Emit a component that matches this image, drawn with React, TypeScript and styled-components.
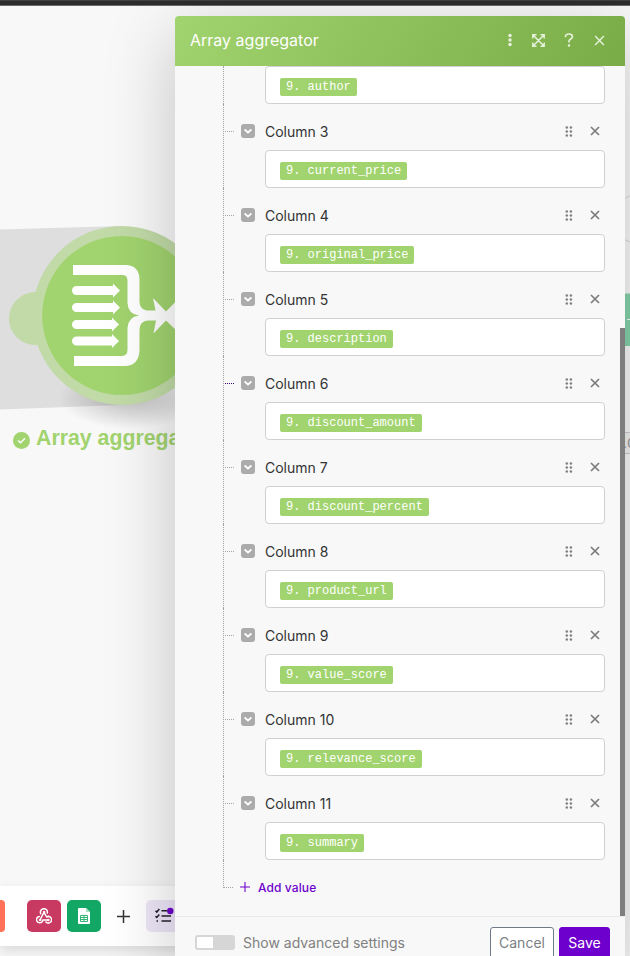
import React from "react";
import styled, { createGlobalStyle } from "styled-components";

const GlobalStyle = createGlobalStyle`
  *, *::before, *::after { box-sizing: border-box; }
  html, body { margin: 0; padding: 0; overflow: hidden; }
  body { font-family: Inter, "Liberation Sans", sans-serif; }
  button { font: inherit; padding: 0; border: 0; background: none; }
  svg { display: block; flex: none; }
`;

const Page = styled.div`
  position: relative;
  display: flex;
  flex-direction: column;
  width: 630px;
  height: 956px;
  overflow: hidden;
  background: #f8f8f8;
`;

const TopStrip = styled.div`
  flex: none;
  height: 6px;
  background: linear-gradient(#424242 0 1px, #2d2d2d 1px 5px, #6b686b 5px);
`;

const Canvas = styled.main`
  position: relative;
  flex: 1;
`;

const Diagram = styled.svg`
  position: absolute;
  left: 0;
  top: -6px;
`;

const NodeLabel = styled.div`
  position: absolute;
  left: 13px;
  top: 419px;
  display: flex;
  align-items: center;
  gap: 6px;
  height: 26px;
  color: #a1d36e;
  font: bold 21.3px/26px "Liberation Sans", Arial, sans-serif;
  white-space: nowrap;

  svg { margin-top: 4px; }
`;

const CountLabel = styled.div`
  position: absolute;
  left: 617px;
  top: 426px;
  width: 40px;
  height: 22px;
  padding-left: 5px;
  border: 1px solid #c9c9c9;
  border-radius: 3px;
  background: #f1f1f1;
  color: #999;
  font: 15px/20px "Liberation Sans", sans-serif;
`;

const Dock = styled.nav`
  display: flex;
  flex: none;
  align-items: center;
  gap: 6px;
  width: 240px;
  height: 60px;
  margin-bottom: 10px;
  background: #fff;
  box-shadow: 0 5px 12px rgba(0, 0, 0, 0.12);
`;

const DockTile = styled.button<{ $color: string; $width?: number; $radius?: string }>`
  display: flex;
  flex: none;
  align-items: center;
  justify-content: center;
  width: ${(p) => p.$width ?? 34}px;
  height: 32px;
  border-radius: ${(p) => p.$radius ?? "5px"};
  background: ${(p) => p.$color};
`;

const DockGap = styled.span<{ $width: number }>`
  flex: none;
  width: ${(p) => p.$width}px;
`;

const Panel = styled.section`
  position: absolute;
  left: 175px;
  top: 16px;
  display: flex;
  flex-direction: column;
  width: 450px;
  height: 954px;
  border-radius: 4px;
  background: #f8f8f8;
  box-shadow: 0 19px 70px rgba(0, 0, 0, 0.22);
`;

const PanelHeader = styled.header`
  display: flex;
  flex: none;
  align-items: center;
  height: 50px;
  padding: 0 19px 2px 15px;
  border-radius: 4px 4px 0 0;
  background: linear-gradient(120deg, #a1d36e, #79ab46);
  color: #fff;
`;

const PanelTitle = styled.h1`
  flex: 1;
  margin: 0;
  font-size: 16px;
  font-weight: 400;
  line-height: 24px;
`;

const HeaderActions = styled.div`
  display: flex;
  align-items: center;
  gap: 16px;
`;

const IconButton = styled.button<{ $width?: number }>`
  display: flex;
  align-items: center;
  justify-content: center;
  width: ${(p) => p.$width ?? 14}px;
  height: 16px;
  color: #e6f1db;
`;

const PanelBody = styled.div`
  display: flex;
  flex: none;
  height: 850px;
`;

const Tree = styled.div`
  flex: 1;
  padding-right: 15px;
  padding-left: 48px;
`;

const Branch = styled.div`
  padding-left: 41px;
  border-left: 1px dotted #a2a2a2;
`;

const RowHeader = styled.div`
  display: flex;
  align-items: center;
  height: 46px;
  margin-left: -41px;
  padding: 8px 4px 0 1px;
`;

const Connector = styled.span<{ $active?: boolean }>`
  flex: none;
  width: 9px;
  border-top: 1px dotted ${(p) => (p.$active ? "#3a0070" : "#a2a2a2")};
`;

const Toggle = styled.button`
  display: flex;
  flex: none;
  align-items: center;
  justify-content: center;
  width: 14px;
  height: 14px;
  margin-right: 10px;
  margin-left: 7px;
  border-radius: 3px;
  background: #ababab;
`;

const ColumnName = styled.span`
  flex: 1;
  padding-top: 1px;
  color: #333;
  font-size: 14px;
  line-height: 20px;
`;

const RowActions = styled.span`
  display: flex;
  align-items: center;
  gap: 17px;
  padding-right: 1px;
`;

const Field = styled.div`
  display: flex;
  align-items: center;
  height: 38px;
  padding-left: 14px;
  border: 1px solid #d0d0d0;
  border-radius: 4px;
  background: #fff;
`;

const Pill = styled.span`
  height: 18px;
  margin-top: 4px;
  padding: 0 6px;
  border-radius: 2px;
  background: #a1d36e;
  color: #fff;
  font: 12px/18px "Liberation Mono", monospace;
  white-space: pre;
`;

const AddRow = styled.div`
  display: flex;
  height: 56px;
`;

const Corner = styled.span`
  width: 10px;
  height: 28px;
  border-bottom: 1px dotted #a2a2a2;
  border-left: 1px dotted #a2a2a2;
`;

const AddButton = styled.button`
  display: flex;
  align-items: center;
  gap: 8px;
  height: 20px;
  margin-top: 17px;
  margin-left: 7px;
  color: #6d00cc;
  font-size: 12px;
  font-weight: 500;
  letter-spacing: 0.1px;
`;

const ScrollTrack = styled.div`
  display: flex;
  align-items: flex-end;
  width: 5px;
`;

const ScrollThumb = styled.div`
  width: 5px;
  height: 588px;
  background: #7e7e7e;
`;

const PanelFooter = styled.footer`
  display: flex;
  flex: none;
  align-items: center;
  height: 52px;
  padding: 0 15px 0 20px;
  border-top: 1px solid #ebebeb;
`;

const Switch = styled.span`
  width: 40px;
  height: 15px;
  border: 2px solid #d6d6d6;
  border-right-width: 22px;
  border-radius: 3px;
  background: #fff;
`;

const SwitchLabel = styled.span`
  flex: 1;
  margin-left: 8px;
  color: #808080;
  font-size: 14px;
`;

const FooterButton = styled.button<{ $primary?: boolean }>`
  height: 32px;
  width: ${(p) => (p.$primary ? 51 : 64)}px;
  margin-left: ${(p) => (p.$primary ? 5 : 0)}px;
  border: 1px solid ${(p) => (p.$primary ? "#6d00cc" : "#6f7c87")};
  border-radius: 3px;
  background: ${(p) => (p.$primary ? "#6d00cc" : "#fff")};
  color: ${(p) => (p.$primary ? "#fff" : "#7b8084")};
  font-size: 14px;
`;

const columns = [
  { name: "Column 3", value: "current_price" },
  { name: "Column 4", value: "original_price" },
  { name: "Column 5", value: "description" },
  { name: "Column 6", value: "discount_amount", active: true },
  { name: "Column 7", value: "discount_percent" },
  { name: "Column 8", value: "product_url" },
  { name: "Column 9", value: "value_score" },
  { name: "Column 10", value: "relevance_score" },
  { name: "Column 11", value: "summary" },
];

const arrows = [290.5, 307.5, 324.5, 341];

const AggregatorNode = () => (
  <Diagram width="630" height="880" viewBox="0 0 630 880">
    <defs>
      <radialGradient id="ground">
        <stop offset="0" stopColor="#000" stopOpacity=".24" />
        <stop offset="1" stopColor="#000" stopOpacity="0" />
      </radialGradient>
    </defs>
    <path d="M0 229.5 122 226V405L0 409.5Z" fill="#dedede" />
    <ellipse cx="130" cy="398" rx="72" ry="31" fill="url(#ground)" />
    <circle cx="35.5" cy="318.5" r="26.5" fill="#c1daa7" />
    <circle cx="122" cy="315.5" r="89.5" fill="#c1daa7" />
    <circle cx="121.700" cy="315.5" r="79.5" fill="#a1d36e" />
    <g fill="#fff">
      <path d="M73 265H126.500Q139.500 266 139.500 280V302Q139.500 309 147 310.500H155.500L153 298 166 311.500 184 293V338L166 320.500 153.500 333.500 156 320.500H148Q139.500 321 139.500 330V350Q139 365 126 366H74V356H121Q127.500 356 127.500 350V328Q128 317 139 315.500Q128 314 127.500 303V281Q127.500 275 123 275H73Z" />
      {arrows.map((y, i) => {
        const tip = i < 2 ? 120 : 119;
        return (
          <path
            key={y}
            d={`M76.500 ${y - 4.5}H${tip - 7}V${y - 7}L${tip} ${y}L${tip - 7} ${y + 7}V${y + 4.5}H76.500A4.500 4.500 0 0 1 76.500 ${y - 4.5}Z`}
          />
        );
      })}
    </g>
    <g fill="none" stroke="#d6d6d6">
      <circle cx="637" cy="219" r="24" />
    </g>
    <path d="M620 293.500H630V346H620Z" fill="#86d2aa" />
    <path d="M627 319.500H630" stroke="#fff" />
  </Diagram>
);

const DoneIcon = () => (
  <svg width="17" height="17" viewBox="0 0 17 17">
    <circle cx="8.500" cy="8.500" r="8.500" fill="#a1d36e" />
    <path d="m5 8.500 2.500 2.300 4.500-4.500" fill="none" stroke="#fff" strokeWidth="1.500" />
  </svg>
);

const WebhookIcon = () => (
  <svg width="16" height="16" viewBox="0 0 16 16" fill="none" stroke="#fff" strokeLinecap="round">
    <g strokeWidth="1.500">
      <path d="M4.800 5.800A3.500 3.500 0 1 1 11.300 5" />
      <path d="M3.300 8.400A3.200 3.200 0 1 0 6.900 12H12" />
      <path d="M8 4.300 10.700 9A3.200 3.200 0 1 1 10 13.900" />
      <path d="M8 4.300 4.200 11.500" />
    </g>
    <g fill="#fff">
      <circle cx="8" cy="4" r=".8" />
      <circle cx="4" cy="12" r=".8" />
      <circle cx="12.300" cy="12" r=".8" />
    </g>
  </svg>
);

const SheetIcon = () => (
  <svg width="12" height="16" viewBox="0 0 12 16">
    <path d="M1 0H8L12 4V15Q12 16 11 16H1Q0 16 0 15V1Q0 0 1 0Z" fill="#fff" />
    <path d="M8 0V4H12" fill="#a9dfc4" />
    <path d="M2.500 7.500H9.500V13.500H2.500ZM2.500 9.500H9.500M2.500 11.500H9.500M6 7.500V13.500" fill="none" stroke="#39b578" />
  </svg>
);

const ChecklistIcon = () => (
  <svg width="24" height="20" viewBox="0 0 24 20" fill="none">
    <path d="m1.500 4.800 1.300 1.300 2.500-3M1.500 10.200l1.300 1.300 2.500-3M7.500 4.700h6M7.500 10h9.500M7.500 15h9.500M2.500 15h1.500" stroke="#24202a" strokeWidth="1.500" />
    <circle cx="16.300" cy="5" r="3.200" fill="#6d00cc" />
  </svg>
);

const PlusIcon = ({ size, color, stroke }: { size: number; color: string; stroke: number }) => (
  <svg width={size} height={size} viewBox="0 0 13 13">
    <path d="M6.500 0V13M0 6.500H13" stroke={color} strokeWidth={stroke} />
  </svg>
);

const CrossIcon = ({ size, stroke }: { size: number; stroke: number }) => (
  <svg width={size} height={size} viewBox="0 0 10 10" stroke="currentColor" strokeWidth={stroke}>
    <path d="m1 1 8 8M9 1 1 9" />
  </svg>
);

const ExpandIcon = () => (
  <svg width="13" height="13" viewBox="0 0 13 13" fill="none" stroke="currentColor" strokeWidth="1.500">
    <path d="M.8 4.500V.8H4.500M8.500.8h3.700V4.500M12.200 8.500v3.700H8.500M4.500 12.200H.8V8.500M1 1l11 11M12 1 1 12" />
  </svg>
);

const HelpIcon = () => (
  <svg width="10" height="14" viewBox="0 0 10 14" fill="none" stroke="currentColor" strokeWidth="1.700">
    <path d="M1.500 4.200V3.500C1.500 1.800 3 1 5 1s3.500 1 3.500 2.700C8.500 6 5 6 5 8.200V9.500" />
    <circle cx="5" cy="12.500" r="1.200" fill="currentColor" stroke="none" />
  </svg>
);

const MoreIcon = () => (
  <svg width="4" height="14" viewBox="0 0 4 14" fill="currentColor">
    <circle cx="2" cy="2.500" r="1.750" />
    <circle cx="2" cy="7" r="1.750" />
    <circle cx="2" cy="11.500" r="1.750" />
  </svg>
);

const GripIcon = () => (
  <svg width="8" height="11" viewBox="0 0 8 11" fill="#808080">
    {[1.5, 5.5, 9.5].map((y) => (
      <React.Fragment key={y}>
        <circle cx="1.800" cy={y} r="1.250" />
        <circle cx="5.900" cy={y} r="1.250" />
      </React.Fragment>
    ))}
  </svg>
);

const ChevronIcon = () => (
  <svg width="8" height="6" viewBox="0 0 8 6" fill="none" stroke="#fff" strokeWidth="1.700">
    <path d="m.6 1.500 3.400 3 3.400-3" />
  </svg>
);

const RemoveButton = styled.button`
  display: flex;
  align-items: center;
  justify-content: center;
  width: 10px;
  height: 10px;
  color: #7c7c7c;
`;

const ValueField = ({ value }: { value: string }) => (
  <Field>
    <Pill>9. {value}</Pill>
  </Field>
);

const ColumnItem = ({ name, value, active }: { name: string; value: string; active?: boolean }) => (
  <Branch>
    <RowHeader>
      <Connector $active={active} />
      <Toggle aria-label="Collapse"><ChevronIcon /></Toggle>
      <ColumnName>{name}</ColumnName>
      <RowActions>
        <GripIcon />
        <RemoveButton aria-label="Remove"><CrossIcon size={10} stroke={1.75} /></RemoveButton>
      </RowActions>
    </RowHeader>
    <ValueField value={value} />
  </Branch>
);

export default function App() {
  return (
    <Page>
      <GlobalStyle />
      <TopStrip />
      <Canvas>
        <AggregatorNode />
        <NodeLabel><DoneIcon />Array aggregator</NodeLabel>
        <CountLabel>.0</CountLabel>
      </Canvas>
      <Dock>
        <DockTile $color="#ff7259" $width={5} $radius="0 4px 4px 0" />
        <DockGap $width={10} />
        <DockTile $color="#c93a63"><WebhookIcon /></DockTile>
        <DockTile $color="#12a765"><SheetIcon /></DockTile>
        <DockTile $color="transparent" $width={33}><PlusIcon size={13} color="#333" stroke={1.5} /></DockTile>
        <DockTile $color="#ede6f8" $width={40}><ChecklistIcon /></DockTile>
      </Dock>
      <Panel>
        <PanelHeader>
          <PanelTitle>Array aggregator</PanelTitle>
          <HeaderActions>
            <IconButton aria-label="More" $width={12}><MoreIcon /></IconButton>
            <IconButton aria-label="Expand" $width={13}><ExpandIcon /></IconButton>
            <IconButton aria-label="Help" $width={16}><HelpIcon /></IconButton>
            <IconButton aria-label="Close" $width={13}><CrossIcon size={11} stroke={1.3} /></IconButton>
          </HeaderActions>
        </PanelHeader>
        <PanelBody>
          <Tree>
            <Branch><ValueField value="author" /></Branch>
            {columns.map((column) => (
              <ColumnItem key={column.name} {...column} />
            ))}
            <AddRow>
              <Corner />
              <AddButton>
                <PlusIcon size={10} color="#6d00cc" stroke={1.4} />
                Add value
              </AddButton>
            </AddRow>
          </Tree>
          <ScrollTrack><ScrollThumb /></ScrollTrack>
        </PanelBody>
        <PanelFooter>
          <Switch />
          <SwitchLabel>Show advanced settings</SwitchLabel>
          <FooterButton>Cancel</FooterButton>
          <FooterButton $primary>Save</FooterButton>
        </PanelFooter>
      </Panel>
    </Page>
  );
}
